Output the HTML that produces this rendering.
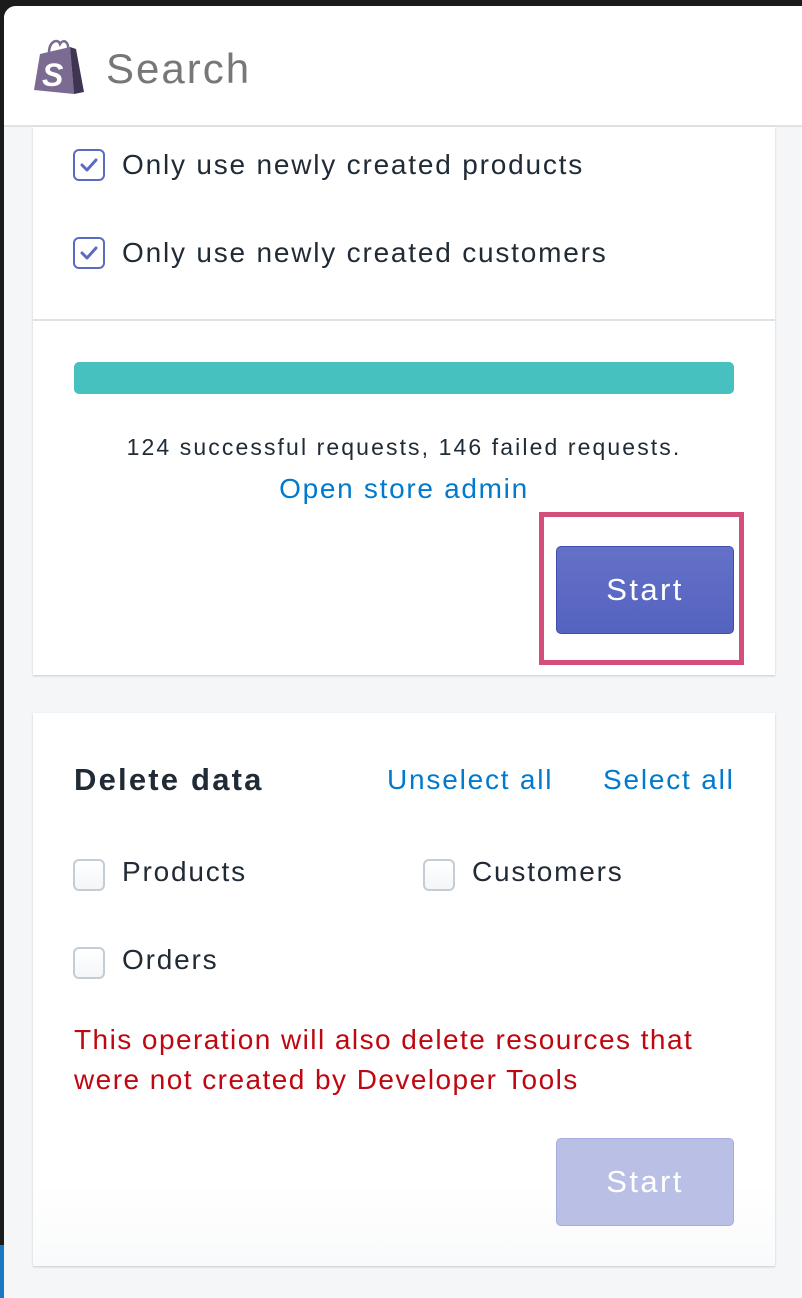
<!DOCTYPE html>
<html><head><style>
*{margin:0;padding:0;box-sizing:border-box}
body{width:802px;height:1298px;background:#1b1b1b;position:relative;overflow:hidden;font-family:"Liberation Sans",sans-serif;color:#212b36}
.win{position:absolute;left:4px;top:6px;width:798px;height:1292px;background:#f4f6f8;border-top-left-radius:12px;overflow:hidden}
.hdr{position:absolute;left:0;top:0;width:798px;height:121px;background:#fff;border-bottom:2px solid #dfe3e8}
.abs{position:absolute;white-space:nowrap}
.card{position:absolute;background:#fff;box-shadow:0 1px 2px rgba(0,0,0,.18)}
.cb{position:absolute;width:32px;height:32px;border:2px solid #c4cdd5;border-radius:6px;background:linear-gradient(#fff,#f4f6f8)}
.cb.on{border-color:#5c6ac4;background:#fff}
.t{font-size:28px;letter-spacing:1.8px}
.link{color:#007ace}
</style></head><body>
<div class="win">
 <div class="hdr">
  <svg class="abs" style="left:30px;top:32px" width="52" height="58" viewBox="0 0 52 58">
   <path d="M6 16 L36 9 L40 56 L0 52 Z" fill="#7b6a92"/>
   <path d="M36 9 L42 11 L50 54 L40 56 Z" fill="#3f3452"/>
   <path d="M15 15 C15 3 24 0 26 6 C29 1 35 3 34 12" fill="none" stroke="#7b6a92" stroke-width="2.5"/>
   <text x="8" y="48" font-family="Liberation Sans" font-weight="bold" font-style="italic" font-size="32" fill="#fff">S</text>
  </svg>
  <div class="abs" style="left:102px;top:39px;font-size:42px;color:#777;letter-spacing:2px">Search</div>
 </div>
 <div class="card" style="left:29px;top:121px;width:742px;height:548px">
  <div class="cb on" style="left:40px;top:22px"><svg width="28" height="28" viewBox="0 0 28 28"><path d="M7 14 L12 19 L21 9" fill="none" stroke="#5c6ac4" stroke-width="3" stroke-linecap="round" stroke-linejoin="round"/></svg></div>
  <div class="abs t" style="left:89px;top:22px">Only use newly created products</div>
  <div class="cb on" style="left:40px;top:110px"><svg width="28" height="28" viewBox="0 0 28 28"><path d="M7 14 L12 19 L21 9" fill="none" stroke="#5c6ac4" stroke-width="3" stroke-linecap="round" stroke-linejoin="round"/></svg></div>
  <div class="abs t" style="left:89px;top:110px">Only use newly created customers</div>
  <div class="abs" style="left:0;top:192px;width:742px;height:2px;background:#dfe3e8"></div>
  <div class="abs" style="left:41px;top:235px;width:660px;height:32px;border-radius:5px;background:#47c1bf"></div>
  <div class="abs" style="left:0;width:742px;text-align:center;top:307px;font-size:23px;letter-spacing:2.1px">124 successful requests, 146 failed requests.</div>
  <div class="abs link" style="left:0;width:742px;text-align:center;top:346px;font-size:28px;letter-spacing:1.7px">Open store admin</div>
  <div class="abs" style="left:506px;top:385px;width:205px;height:153px;border:5px solid #d44e7c"></div>
  <div class="abs" style="left:523px;top:419px;width:178px;height:88px;border-radius:5px;border:1px solid #3f4eae;background:linear-gradient(#6371c7,#5563c1);color:#fff;font-size:31px;text-align:center;line-height:86px;letter-spacing:2.4px">Start</div>
 </div>
 <div class="card" style="left:29px;top:707px;width:742px;height:553px;background:linear-gradient(#fff 85%,#f9fafb)">
  <div class="abs" style="left:41px;top:49px;font-size:31px;font-weight:bold;letter-spacing:2.2px">Delete data</div>
  <div class="abs link t" style="left:354px;top:51px">Unselect all</div>
  <div class="abs link t" style="left:570px;top:51px">Select all</div>
  <div class="cb" style="left:40px;top:146px"></div>
  <div class="abs t" style="left:89px;top:143px">Products</div>
  <div class="cb" style="left:390px;top:146px"></div>
  <div class="abs t" style="left:439px;top:143px">Customers</div>
  <div class="cb" style="left:40px;top:234px"></div>
  <div class="abs t" style="left:89px;top:231px">Orders</div>
  <div class="abs t" style="left:41px;top:307px;color:#bf0711;line-height:40px;letter-spacing:1.45px">This operation will also delete resources that<br>were not created by Developer Tools</div>
  <div class="abs" style="left:523px;top:425px;width:178px;height:88px;border-radius:5px;border:1px solid #a6acdf;background:#bac0e5;color:#fff;font-size:31px;text-align:center;line-height:86px;letter-spacing:2.4px">Start</div>
 </div>
</div>
<div class="abs" style="left:0;top:1245px;width:4px;height:53px;background:#1a78c2"></div>
</body></html>
